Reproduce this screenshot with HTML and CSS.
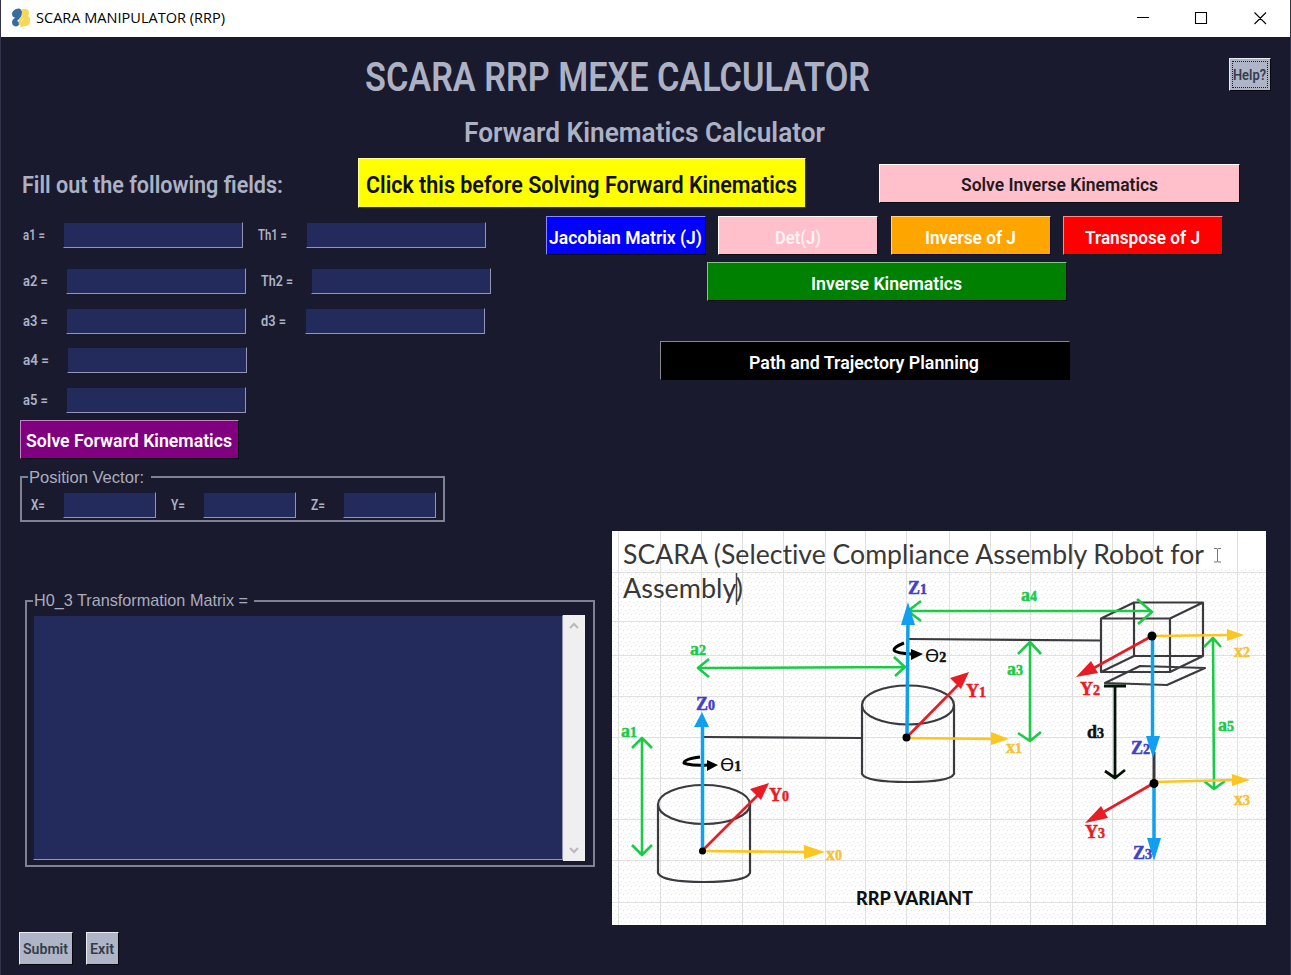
FILE: index.html
```html
<!DOCTYPE html>
<html lang="en">
<head>
<meta charset="utf-8">
<title>SCARA MANIPULATOR (RRP)</title>
<link rel="stylesheet" href="styles.css">
</head>
<body>
<div class="window">
  <header class="titlebar">
    <svg class="app-icon" width="20" height="20" viewBox="0 0 20 20">
      <path fill="#f7d758" d="M11 1h3a4 4 0 0 1 4 4a4 4 0 0 1-1 3a4.500 4.500 0 0 1 2 5a4.500 4.500 0 0 1-4 5l-5 1q-2-2 0-5l3-4q-3-1-2-9z"/>
      <path fill="#366d9c" d="M5 1Q10-1 11 4q0 4-2 6l-3 3 2 1q1 4-3 4.500Q1 18 1 14q0-2 3-4.500Q1 9 1 6t4-5z"/>
      <path stroke="#f7d758" stroke-width="2.500" fill="none" d="M13 9q-4 1-4 5v3"/>
    </svg>
    <svg class="caption" width="189" height="20"><text y="15" textLength="189" lengthAdjust="spacingAndGlyphs">SCARA MANIPULATOR (RRP)</text></svg>
    <svg class="controls" width="130" height="14" viewBox="0 0 130 14">
      <path d="M0 6.500h12M58.500 1.500h11v11h-11zM117.500 1.500l11.500 11.500M129 1.500L117.500 13"/>
    </svg>
  </header>

  <div class="title-row">
    <svg class="din title" width="505" height="40"><text y="34" textLength="505" lengthAdjust="spacingAndGlyphs">SCARA RRP MEXE CALCULATOR</text></svg>
    <button class="btn plain help"><svg class="din small" width="33" height="16"><text y="13" textLength="33" lengthAdjust="spacingAndGlyphs">Help?</text></svg></button>
  </div>
  <div class="subtitle-row">
    <svg class="din subtitle" width="361" height="30"><text y="26" textLength="361" lengthAdjust="spacingAndGlyphs">Forward Kinematics Calculator</text></svg>
  </div>

  <div class="action-row">
    <svg class="din large" width="261" height="24"><text y="22" textLength="261" lengthAdjust="spacingAndGlyphs">Fill out the following fields:</text></svg>
    <button class="btn yellow"><svg class="din large" width="431" height="24"><text y="20" textLength="431" lengthAdjust="spacingAndGlyphs">Click this before Solving Forward Kinematics</text></svg></button>
    <button class="btn pink wide"><svg class="din medium" width="197" height="20"><text y="16" textLength="197" lengthAdjust="spacingAndGlyphs">Solve Inverse Kinematics</text></svg></button>
  </div>

  <div class="upper">
    <div class="form">
      <div class="field-row r1">
        <svg class="din small" width="22" height="16"><text y="13" textLength="22" lengthAdjust="spacingAndGlyphs">a1 =</text></svg><span class="input ml18"></span>
        <svg class="din small ml15" width="29" height="16"><text y="13" textLength="29" lengthAdjust="spacingAndGlyphs">Th1 =</text></svg><span class="input ml19"></span>
      </div>
      <div class="field-row r2">
        <svg class="din small" width="25" height="16"><text y="13" textLength="25" lengthAdjust="spacingAndGlyphs">a2 =</text></svg><span class="input ml18"></span>
        <svg class="din small ml15" width="32" height="16"><text y="13" textLength="32" lengthAdjust="spacingAndGlyphs">Th2 =</text></svg><span class="input ml18"></span>
      </div>
      <div class="field-row r3">
        <svg class="din small" width="25" height="16"><text y="13" textLength="25" lengthAdjust="spacingAndGlyphs">a3 =</text></svg><span class="input ml18"></span>
        <svg class="din small ml15" width="25" height="16"><text y="13" textLength="25" lengthAdjust="spacingAndGlyphs">d3 =</text></svg><span class="input ml19"></span>
      </div>
      <div class="field-row r4">
        <svg class="din small" width="26" height="16"><text y="13" textLength="26" lengthAdjust="spacingAndGlyphs">a4 =</text></svg><span class="input ml18"></span>
      </div>
      <div class="field-row r5">
        <svg class="din small" width="25" height="16"><text y="13" textLength="25" lengthAdjust="spacingAndGlyphs">a5 =</text></svg><span class="input ml18"></span>
      </div>
      <button class="btn purple"><svg class="din medium" width="206" height="20"><text y="15" textLength="206" lengthAdjust="spacingAndGlyphs">Solve Forward Kinematics</text></svg></button>
      <fieldset class="frame position">
        <legend><svg class="arial" width="115" height="18"><text y="15" textLength="115" lengthAdjust="spacingAndGlyphs">Position Vector:</text></svg></legend>
        <svg class="din small" width="14" height="16"><text y="13" textLength="14" lengthAdjust="spacingAndGlyphs">X=</text></svg><span class="input short"></span>
        <svg class="din small" width="14" height="16"><text y="13" textLength="14" lengthAdjust="spacingAndGlyphs">Y=</text></svg><span class="input short"></span>
        <svg class="din small" width="14" height="16"><text y="13" textLength="14" lengthAdjust="spacingAndGlyphs">Z=</text></svg><span class="input short"></span>
      </fieldset>
    </div>

    <div class="operations">
      <div class="matrix-buttons">
        <button class="btn blue"><svg class="din medium" width="153" height="20"><text y="16" textLength="153" lengthAdjust="spacingAndGlyphs">Jacobian Matrix (J)</text></svg></button>
        <button class="btn pink light"><svg class="din medium" width="46" height="20"><text y="16" textLength="46" lengthAdjust="spacingAndGlyphs">Det(J)</text></svg></button>
        <button class="btn orange"><svg class="din medium" width="91" height="20"><text y="16" textLength="91" lengthAdjust="spacingAndGlyphs">Inverse of J</text></svg></button>
        <button class="btn red"><svg class="din medium" width="115" height="20"><text y="16" textLength="115" lengthAdjust="spacingAndGlyphs">Transpose of J</text></svg></button>
      </div>
      <button class="btn green"><svg class="din medium" width="151" height="20"><text y="16" textLength="151" lengthAdjust="spacingAndGlyphs">Inverse Kinematics</text></svg></button>
      <button class="btn black"><svg class="din medium" width="230" height="20"><text y="16" textLength="230" lengthAdjust="spacingAndGlyphs">Path and Trajectory Planning</text></svg></button>
    </div>
  </div>

  <div class="lower">
    <div class="output">
      <fieldset class="frame matrix">
        <legend><svg class="arial" width="214" height="18"><text y="14" textLength="214" lengthAdjust="spacingAndGlyphs">H0_3 Transformation Matrix =</text></svg></legend>
        <div class="textarea"></div>
        <div class="scrollbar">
          <svg width="10" height="7" viewBox="0 0 10 7"><path d="M1 6l4-4 4 4"/></svg>
          <svg width="10" height="7" viewBox="0 0 10 7"><path d="M1 1l4 4 4-4"/></svg>
        </div>
      </fieldset>
      <div class="footer">
        <button class="btn plain submit"><svg class="din small" width="45" height="16"><text y="13" textLength="45" lengthAdjust="spacingAndGlyphs">Submit</text></svg></button>
        <button class="btn plain exit"><svg class="din small" width="24" height="16"><text y="13" textLength="24" lengthAdjust="spacingAndGlyphs">Exit</text></svg></button>
      </div>
    </div>

    <svg class="diagram" width="654" height="394" viewBox="612 531 654 394">
      <defs>
        <pattern id="dots" width="8" height="8" patternUnits="userSpaceOnUse">
          <path fill="#e4e8e2" d="M1 2h1v1h-1zM5 1h1v1h-1zM3 5h1v1h-1zM7 6h1v1h-1z"/>
        </pattern>
      </defs>
      <rect x="612" y="531" width="654" height="394" fill="#fff"/>
      <rect x="612" y="568" width="654" height="356" fill="url(#dots)"/>
      <path class="gridlines" d="M618.500 531v394M660.500 531v394M701.500 531v394M742.500 531v394M783.500 531v394M825.500 531v394M865.500 531v394M906.500 531v394M949.500 531v394M990.500 531v394M1030.500 531v394M1072.500 531v394M1112.500 531v394M1153.500 531v394M1196.500 531v394M1237.500 531v394M612 572.500h654M612 621.500h654M612 655.500h654M612 696.500h654M612 737.500h654M612 778.500h654M612 819.500h654M612 860.500h654M612 902.500h654"/>

      <g class="heading">
        <text x="623" y="564" textLength="581" lengthAdjust="spacingAndGlyphs">SCARA (Selective Compliance Assembly Robot for</text>
        <text x="623" y="598" textLength="120" lengthAdjust="spacingAndGlyphs">Assembly)</text>
      </g>
      <path d="M736.500 573v32" stroke="#444" stroke-width="1.500"/>
      <path d="M1214 548.500h3l.5 1 .5-1h3M1217.500 549v12M1214 562h3l.5-1 .5 1h3" stroke="#777" fill="none"/>

      <g class="body-lines">
        <path d="M703 737l159 1M908 639l193 1.500"/>
        <ellipse cx="704" cy="804.500" rx="46" ry="19.500"/>
        <path d="M658 804v69q4 9 46 9t46-9v-69"/>
        <ellipse cx="908" cy="705" rx="46" ry="19.500"/>
        <path d="M862 705v69q4 8 46 8t46-8v-69"/>
        <path d="M1101 618.500h69v53.500h-69zM1134 602.500h69v53.500h-69zM1101 618.500l33-16M1170 618.500l33-16M1101 672l33-16M1170 672l33-16M1105 683l62 2 38-17-65-2z"/>
        <path d="M1154 752v30" stroke-width="3"/>
      </g>

      <g class="green-lines">
        <path d="M642 738v117M632 748l10-10 10 10M632 845l10 10 10-10"/>
        <path d="M699 668l206-1M709 659l-11 9 11 9M894 657l11 10-10 9"/>
        <path d="M909 611h243M921 601l-13 10 13 10M1137 599l15 13-14 12"/>
        <path d="M1030 642v99M1018 654l12-12 11 12M1018 733l12 8 11-9"/>
        <path d="M1213 638l1 150M1204 647l9-9 8 9M1204 781l10 8 11-8"/>
      </g>

      <g class="turn">
        <path d="M700 757q-16 2-16 6l3 1q8 2 22 1M904 643q-10 4-10 7t17 4"/>
        <path class="head" d="M707 760l11 5-11 6zM911 649l12 5-12 6z"/>
      </g>

      <g class="yellow-lines">
        <path d="M702 851l105 1M906 738l87 1M1152 636l78-1M1154 782l80-2"/>
        <path class="head" d="M804 845l21 7-21 7zM991 732l18 7-18 6zM1227 629l17 6-17 6zM1232 774l18 6-18 6z"/>
      </g>
      <g class="blue-lines">
        <path d="M702.500 851V725M907 737l1-120M1152.500 636V740M1154 783v60"/>
        <path class="head" d="M702 712l7 15h-15zM908 602l7 23h-14zM1153 758l-7-22h14zM1154 861l-7-23h14z"/>
      </g>
      <g class="red-lines">
        <path d="M702 851l58-58M907 737l54-55M1152 636l-60 33M1154 783l-54 31"/>
        <path class="head" d="M769 783l-8 17-11-11zM969 672l-8 17-11-11zM1076 677l15-16 7 12zM1085 823l16-17 7 12z"/>
      </g>

      <path d="M1104 686h22M1115 686v91M1105 771l10 7 10-8" fill="none" stroke="#001407" stroke-width="2.800"/>
      <g fill="#000">
        <circle cx="702.500" cy="851" r="3.500"/><circle cx="906.500" cy="737.500" r="4"/>
        <circle cx="1152" cy="636" r="4.500"/><circle cx="1154" cy="783.500" r="4.500"/>
      </g>

      <g class="mark green"><text x="621" y="737">a<tspan class="sub">1</tspan></text><text x="690" y="655">a<tspan class="sub">2</tspan></text><text x="1007" y="675">a<tspan class="sub">3</tspan></text><text x="1021" y="601">a<tspan class="sub">4</tspan></text><text x="1218" y="731">a<tspan class="sub">5</tspan></text></g>
      <g class="mark indigo"><text x="696" y="710">Z<tspan class="sub">0</tspan></text><text x="908" y="594">Z<tspan class="sub">1</tspan></text><text x="1131" y="754">Z<tspan class="sub">2</tspan></text><text x="1133" y="859">Z<tspan class="sub">3</tspan></text></g>
      <g class="mark red"><text x="769" y="801">Y<tspan class="sub">0</tspan></text><text x="966" y="697">Y<tspan class="sub">1</tspan></text><text x="1080" y="695">Y<tspan class="sub">2</tspan></text><text x="1085" y="838">Y<tspan class="sub">3</tspan></text></g>
      <g class="mark yellow"><text x="826" y="860">x<tspan class="sub">0</tspan></text><text x="1006" y="753">x<tspan class="sub">1</tspan></text><text x="1234" y="657">x<tspan class="sub">2</tspan></text><text x="1234" y="805">x<tspan class="sub">3</tspan></text></g>
      <g class="mark dark"><text x="1087" y="738">d<tspan class="sub">3</tspan></text><text x="720" y="771"><tspan class="theta">ϴ</tspan><tspan class="sub">1</tspan></text><text x="925" y="662"><tspan class="theta">ϴ</tspan><tspan class="sub">2</tspan></text></g>
      <text class="variant" x="856" y="905" textLength="117" lengthAdjust="spacingAndGlyphs">RRP VARIANT</text>
    </svg>
  </div>
</div>
</body>
</html>
```

FILE: styles.css
```css
* { box-sizing: border-box; }
body { margin: 0; background: #1a1a2f; overflow: hidden; }
svg { display: block; flex: none; overflow: visible; }

.window { width: 1291px; height: 975px; display: flex; flex-direction: column; border: solid #33334c; border-width: 0 1px; }

.titlebar { height: 37px; flex: none; display: flex; align-items: center; background: #fff; padding: 0 23px 2px 10px; }
.caption { margin-left: 5px; font: 15px "Open Sans", sans-serif; }
.controls { margin-left: auto; }
.controls path { fill: none; stroke: #000; stroke-width: 1.1; }

/* Condensed label faces */
.din { font-family: Roboto, sans-serif; font-weight: 500; fill: #acb2c4; }
.title { font-size: 40px; font-weight: 600; }
.subtitle { font-size: 28px; font-weight: 600; }
.large { font-size: 23px; font-weight: 600; }
.medium { font-size: 19px; font-weight: 600; }
.small { font-size: 15.5px; font-weight: 600; }
.arial { font: 17px "Liberation Sans", sans-serif; fill: #a9adbc; }

.title-row { height: 79px; flex: none; display: flex; align-items: flex-start; justify-content: space-between; padding: 20px 19px 0 364px; }
.subtitle-row { height: 42px; flex: none; padding-left: 463px; }
.action-row { height: 50px; flex: none; display: flex; align-items: center; padding-left: 21px; }

.btn { display: flex; flex: none; align-items: center; justify-content: center; height: 39px; margin: 0; padding: 4px 1px 0 0; border: 1px solid; border-color: #ffffff88 #0b0b14 #0b0b14 #ffffff88; border-radius: 0; }
.btn .din { fill: #fff; }
.plain { height: 33px; padding: 1px 1px 0 0; background: #afb5c6; border-color: #e9ebf0 #07070d #07070d #e9ebf0; }
.plain .din { fill: #343d4b; }
.help { width: 42px; margin-top: 1px; outline: 1px dotted #1a1a4f; outline-offset: -4px; }
.yellow.btn { width: 448px; height: 50px; margin-left: 75px; background: #ff0; border-color: #ffffa0 #303000 #303000 #ffffa0; }
.yellow .din { fill: #101000; }
.wide { width: 361px; margin: 0 0 0 73px; padding-right: 0; }
.wide .din { fill: #221a20; }
.pink { background: #ffc0cb; border-color: #fff #0b0b14 #0b0b14 #fff; }
.light .din { fill: #fff3f4; }
.blue { background: #00f; }
.orange { background: #ffa500; }
.btn.red { background: #f00; }
.btn.green { width: 360px; background: #008000; margin: 7px 0 0 161px; }
.black { width: 410px; background: #000; margin: 40px 0 0 114px; padding-right: 2px; border-right-color: #000; border-bottom-color: #000; }
.purple { width: 219px; background: #800080; margin: 7px 0 0 19px; }

.upper { height: 316px; flex: none; display: flex; }
.form { width: 545px; }
.operations { padding-top: 8px; }
.matrix-buttons { display: grid; grid-template-columns: repeat(4, 160px); column-gap: 12.4px; }

.field-row { display: flex; align-items: center; height: 26px; padding-left: 22px; }
.r1 { margin-top: 14px; }
.r2 { margin-top: 20px; }
.r3 { margin-top: 14px; }
.r4 { margin-top: 13px; }
.r5 { margin-top: 14px; }
.input { width: 180px; height: 26px; flex: none; background: #232b5c; border: 1px solid; border-color: #171a30 #9296b2 #9296b2 #171a30; }
.ml15 { margin-left: 15px; }
.ml18 { margin-left: 18px; }
.ml19 { margin-left: 19px; }

/* Grooved frames with a caption set into the top edge */
.frame { margin: 0; padding: 0; min-width: 0; border: 2px solid #808193; }
.position { display: flex; align-items: center; width: 425px; height: 54px; margin: 9px 0 0 19px; padding: 3px 0 0 9px; }
.position legend { padding: 0 7px 0 1px; margin-left: -3px; }
.position .short { width: 93px; margin: 0 15px 0 18px; }
.matrix legend { padding: 0 6px 0 1px; margin-left: 0; }

.lower { height: 451px; display: flex; align-items: flex-start; padding-top: 7px; }
.output { width: 611px; padding: 61px 0 0 24px; }
.matrix { display: flex; width: 570px; height: 275px; padding: 5px 0 0 6px; }
.textarea { width: 530px; height: 245px; background: #232b5c; border: 1px solid; border-color: #171a30 #9296b2 #9296b2 #171a30; }
.scrollbar { width: 22px; height: 246px; display: flex; flex-direction: column; align-items: center; justify-content: space-between; padding: 7px 0; background: #efefef; }
.scrollbar path { fill: none; stroke: #b9b9b9; stroke-width: 2; }
.footer { display: flex; gap: 13px; margin: 65px 0 0 -6px; }
.submit { width: 54px; }
.exit { width: 33px; }

.diagram path, .diagram ellipse { stroke-linejoin: round; }
.gridlines { fill: none; stroke: #dfe1df; }
.heading { font: 26px Lato, sans-serif; font-variant-ligatures: none; fill: #383838; }
.body-lines { fill: none; stroke: #3b3b3f; stroke-width: 2.2; }
.green-lines { fill: none; stroke: #1bcb48; stroke-width: 2.6; }
.turn { fill: none; stroke: #000; stroke-width: 3; }
.yellow-lines { fill: none; stroke: #fcc51f; stroke-width: 2.6; }
.blue-lines { fill: none; stroke: #11a0f0; stroke-width: 3.5; }
.red-lines { fill: none; stroke: #e91c25; stroke-width: 2.6; }
.head { stroke: none; }
.turn .head { fill: #000; }
.yellow-lines .head { fill: #fcc51f; }
.blue-lines .head { fill: #11a0f0; }
.red-lines .head { fill: #e91c25; }
.mark { font: bold 18px "Liberation Serif", serif; stroke-width: .5; }
.mark .sub { font-size: 14px; }
.mark.green { fill: #1bcb48; stroke: #1bcb48; }
.mark.indigo { fill: #4040c8; stroke: #4040c8; }
.mark.red { fill: #e91c25; stroke: #e91c25; }
.mark.yellow { fill: #f5c236; stroke: #f5c236; }
.mark.dark { fill: #101010; stroke: #101010; }
.mark .theta { font: 18px "DejaVu Sans", sans-serif; stroke: none; }
.variant { font: 900 19px Lato, sans-serif; fill: #111; }
```
